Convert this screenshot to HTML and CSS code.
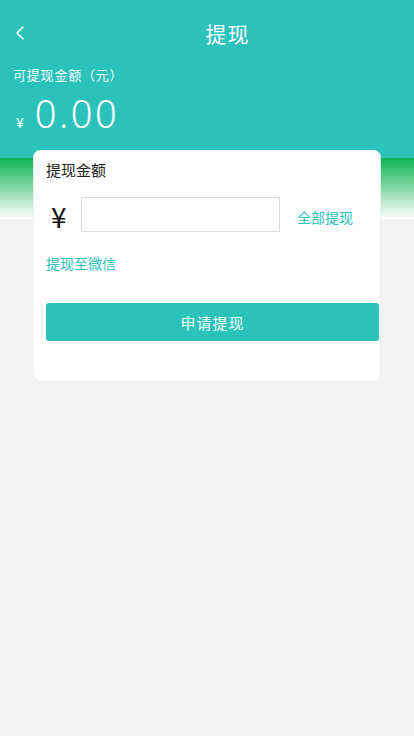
FILE: index.html
```html
<!DOCTYPE html>
<html lang="zh-CN">
<head>
<meta charset="utf-8">
<meta name="viewport" content="width=device-width, initial-scale=1">
<title>提现</title>
<link rel="stylesheet" href="styles.css">
</head>
<body>
<div class="page">
  <header class="hero">
    <div class="nav">
      <span class="back">
        <svg width="10" height="14" viewBox="0 0 10 14"><path d="M8 1 L2 7 L8 13" fill="none" stroke="#fff" stroke-width="1.6" stroke-linecap="round" stroke-linejoin="round"/></svg>
      </span>
      <h1 class="title">提现</h1>
    </div>
    <div class="label">可提现金额（元）</div>
    <div class="amount"><span class="cur">¥</span><span class="num">0.00</span></div>
  </header>
  <section class="card">
    <div class="card-title">提现金额</div>
    <div class="row">
      <span class="yen">¥</span>
      <input class="input" type="text">
      <span class="all">全部提现</span>
    </div>
    <div class="to">提现至微信</div>
    <button class="btn">申请提现</button>
  </section>
</div>
</body>
</html>
```
FILE: styles.css
```css
* { box-sizing: border-box; margin: 0; padding: 0; }
html, body { height: 100%; }
body {
  font-family: "Noto Sans CJK SC", "Noto Sans", sans-serif;
  background: #f4f4f4;
}
.page {
  min-height: 736px;
  background: linear-gradient(to bottom, #2cc2bc 0, #2cc2bc 158px, #0db24f 158px, #ffffff 219px, #f4f4f4 219px) no-repeat;
  background-color: #f4f4f4;
}
.hero {
  height: 158px;
  color: #fff;
}
.nav {
  height: 66px;
  display: flex;
  align-items: center;
  padding-left: 15px;
}
.back { width: 10px; height: 14px; display: flex; }
.title {
  flex: 1;
  text-align: center;
  font-size: 21px;
  font-weight: 400;
  padding-left: 16px;
  line-height: 28px;
  letter-spacing: 1px;
}
.label {
  padding-left: 13px;
  font-size: 13px;
  line-height: 18px;
  letter-spacing: 0.8px;
  opacity: 0.95;
}
.amount {
  display: flex;
  align-items: baseline;
  padding-left: 16px;
  margin-top: 7px;
}
.cur { font-size: 14px; margin-right: 11px; }
.num {
  font-family: "Noto Sans", sans-serif;
  font-weight: 300;
  font-size: 38px;
  line-height: 44px;
  letter-spacing: 2.5px;
}
.card {
  margin: -8px 33px 0 33px;
  background: #fff;
  border: 1px solid #e8f0ee;
  border-radius: 7px;
  padding: 9px 1px 40px 12px;
}
.card-title {
  font-size: 15px;
  line-height: 20px;
  color: #222;
}
.row {
  display: flex;
  align-items: center;
  height: 35px;
  margin-top: 17px;
}
.yen {
  font-size: 28px;
  color: #111;
  width: 35px;
  padding-left: 5px;
  line-height: 35px;
  position: relative;
  top: 2px;
}
.input {
  width: 199px;
  height: 35px;
  border: 1px solid #dcdcdc;
  outline: none;
  background: #fff;
}
.all {
  margin-left: 17px;
  font-size: 14px;
  color: #2cc2bc;
  position: relative;
  top: 2px;
}
.to {
  margin-top: 22px;
  font-size: 14px;
  line-height: 18px;
  color: #2cc2bc;
}
.btn {
  display: block;
  width: 333px;
  height: 38px;
  margin-top: 31px;
  border: none;
  border-radius: 3px;
  background: #2cc2bc;
  color: #fff;
  font-family: "Noto Sans CJK SC", sans-serif;
  font-size: 15px;
  letter-spacing: 1px;
}
```
